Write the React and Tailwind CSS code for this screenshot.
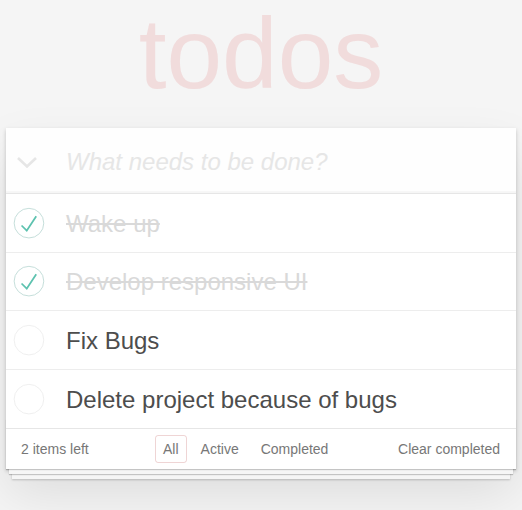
import { useState } from 'react'

const initialTodos = [
  { id: 1, title: 'Wake up', completed: true },
  { id: 2, title: 'Develop responsive UI', completed: true },
  { id: 3, title: 'Fix Bugs', completed: false },
  { id: 4, title: 'Delete project because of bugs', completed: false },
]

function ToggleIcon({ checked }) {
  return (
    <svg width="40" height="40" viewBox="-10 -18 100 135" className="shrink-0">
      <circle
        cx="50"
        cy="50"
        r="50"
        fill="none"
        stroke={checked ? '#bddad5' : '#ededed'}
        strokeWidth="3"
      />
      {checked ? <path fill="#5dc2af" d="M72 25L42 71 27 56l-4 4 20 20 34-52z" /> : null}
    </svg>
  )
}

function TodoRow({ todo, isLast, onToggle }) {
  return (
    <li
      className={`flex h-[58.5px] items-center ${isLast ? '' : 'border-b border-[#ededed]'}`}
    >
      <button type="button" onClick={() => onToggle(todo.id)} className="flex w-[40px] justify-center">
        <ToggleIcon checked={todo.completed} />
      </button>
      <span
        className={`ml-[20px] pt-[3px] text-[24px] leading-[1.2] ${
          todo.completed ? 'text-[#d9d9d9] line-through' : 'text-[#4d4d4d]'
        }`}
      >
        {todo.title}
      </span>
    </li>
  )
}

export default function App() {
  const [todos, setTodos] = useState(initialTodos)
  const [filter, setFilter] = useState('All')

  function handleToggle(id) {
    setTodos((current) =>
      current.map((todo) => (todo.id === id ? { ...todo, completed: !todo.completed } : todo)),
    )
  }

  const left = todos.filter((todo) => !todo.completed).length

  return (
    <div className="min-h-[510px] bg-[#f5f5f5] font-['Liberation_Sans',Arial,sans-serif] text-[#4d4d4d]">
      <h1 className="h-[128px] pt-[3px] text-center text-[100px] leading-[100px] text-[#f1dcdc]">
        todos
      </h1>

      <section className="relative mx-[6px] bg-white shadow-[0_2px_4px_0_rgba(0,0,0,0.2),0_25px_50px_0_rgba(0,0,0,0.1)]">
        <header className="relative flex h-[65px] items-center bg-[rgba(0,0,0,0.003)] shadow-[inset_0_-2px_1px_rgba(0,0,0,0.03)]">
          <svg width="22" height="13" viewBox="0 0 22 13" className="absolute left-[10px] top-[28px]">
            <path d="M2 2 L11 10.5 L20 2" fill="none" stroke="#e6e6e6" strokeWidth="2.6" />
          </svg>
          <input
            type="text"
            placeholder="What needs to be done?"
            className="h-full w-full bg-transparent pl-[60px] pr-4 pt-[2px] text-[24px] outline-none placeholder:italic placeholder:text-[#e6e6e6]"
          />
        </header>

        <ul className="border-t border-[#e6e6e6]">
          {todos.map((todo, index) => (
            <TodoRow
              key={todo.id}
              todo={todo}
              isLast={index === todos.length - 1}
              onToggle={handleToggle}
            />
          ))}
        </ul>

        <footer className="relative flex h-[41px] items-center border-t border-[#e6e6e6] pl-[15px] pr-[16px] text-[14px] leading-[20px] text-[#777]">
          <div
            aria-hidden="true"
            className="pointer-events-none absolute inset-x-0 bottom-0 h-[50px] overflow-hidden shadow-[0_1px_1px_rgba(0,0,0,0.2),0_8px_0_-3px_#f6f6f6,0_9px_1px_-3px_rgba(0,0,0,0.2),0_16px_0_-6px_#f6f6f6,0_17px_2px_-6px_rgba(0,0,0,0.2)]"
          />
          <span className="w-[131px]">{left} items left</span>
          <ul className="relative flex">
            {['All', 'Active', 'Completed'].map((name) => (
              <li key={name}>
                <button
                  type="button"
                  onClick={() => setFilter(name)}
                  className={`m-[3px] rounded-[3px] border px-[7px] py-[3px] leading-[20px] ${
                    filter === name ? 'border-[rgba(175,47,47,0.2)]' : 'border-transparent'
                  }`}
                >
                  {name}
                </button>
              </li>
            ))}
          </ul>
          <button type="button" className="relative ml-auto leading-[20px]">
            Clear completed
          </button>
        </footer>
      </section>
    </div>
  )
}
